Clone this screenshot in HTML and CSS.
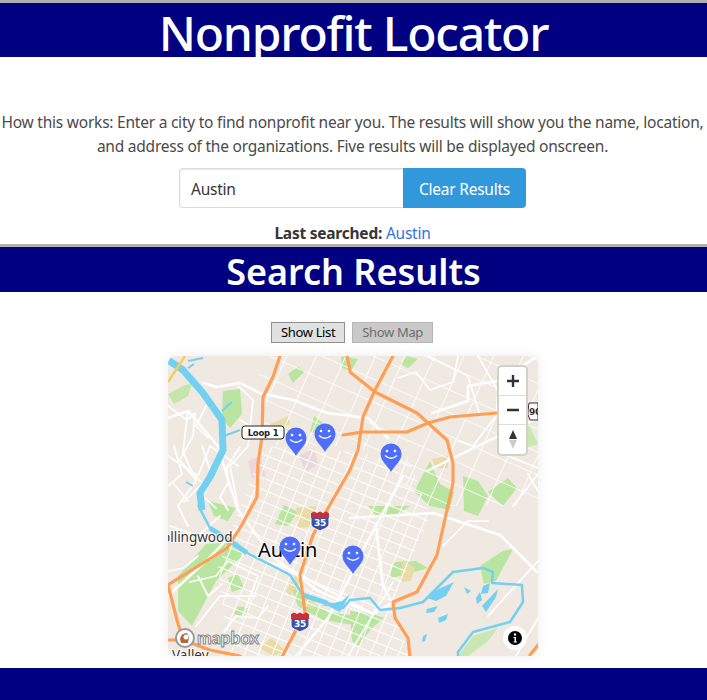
FILE: index.html
```html
<!DOCTYPE html>
<html lang="en">

<head>
    <meta charset="UTF-8">
    <meta name="viewport" content="width=device-width, initial-scale=1.0">
    <title>Nonprofit Locator</title>

    <link rel="stylesheet" href="styles.css">
</head>

<body>
    <header class="banner">
        <h1>Nonprofit Locator</h1>
    </header>

    <section class="search">
        <p class="intro">How this works: Enter a city to find nonprofit near you. The results will show you the name, location, and address of the organizations. Five results will be displayed onscreen.</p>
        <form class="search-form">
            <input class="search-input" type="text" value="Austin">
            <button class="clear-btn" type="button">Clear Results</button>
        </form>
        <p class="last-searched"><strong>Last searched:</strong> <a href="#">Austin</a></p>
    </section>

    <section class="results">
        <h2 class="results-title">Search Results</h2>
        <div class="toggle">
            <button class="toggle-btn" type="button">Show List</button>
            <button class="toggle-btn" type="button" disabled>Show Map</button>
        </div>

        <div class="map">
            <svg class="map-canvas" viewBox="0 0 370 300" width="370" height="300">
                <defs>
                    <pattern id="grid-dense" width="13" height="11" patternUnits="userSpaceOnUse" patternTransform="rotate(22)">
                        <path d="M0 0H13M0 0V11" stroke="#fff" stroke-width="1.900" fill="none" />
                    </pattern>
                    <pattern id="grid-wide" width="27" height="21" patternUnits="userSpaceOnUse" patternTransform="rotate(24)">
                        <path d="M0 0H27M0 0V21" stroke="#fff" stroke-width="1.700" fill="none" />
                    </pattern>
                    <g id="pin">
                        <path d="M0 18C-3 12-10.500 7-10.500 0A10.500 10.500 0 0 1 10.500 0C10.500 7 3 12 0 18Z" fill="#4f6ef7" />
                        <circle cx="-4" cy="-3" r="1.300" fill="#fff" />
                        <circle cx="4" cy="-3" r="1.300" fill="#fff" />
                        <path d="M-6 1.500Q0 7 6 1.500" fill="none" stroke="#fff" stroke-width="1.300" />
                    </g>
                    <g id="shield">
                        <path d="M-9-8H9V3C9 7 3 8 0 10C-3 8-9 7-9 3Z" fill="#3f51a5" stroke="#fff" stroke-width="1" />
                        <path d="M-9-3V-8L-6-9.500-3-8 0-9.500 3-8 6-9.500 9-8V-3Z" fill="#c8303a" />
                        <text class="shield-text" y="4.500" text-anchor="middle">35</text>
                    </g>
                </defs>

                <rect width="370" height="300" fill="#efe9e1" />

                <!-- parks -->
                <g fill="#b9e5a0">
                    <path d="M55 35L72 33 74 58 62 72 54 62Z" />
                    <path d="M0 38L15 30 24 27 20 40 6 48Z" opacity=".8" />
                    <path d="M120 18L130 11 137 15 125 27Z" />
                    <path d="M146 60L156 68 155 78 142 76Z" />
                    <path d="M173 0L190 3 183 15 174 12Z" />
                    <path d="M239 0L250 3 240 12 232 8Z" />
                    <path d="M262 105L272 128 286 136 282 154 262 150 246 136Z" />
                    <path d="M295 120L310 125 320 140 310 160 296 155Z" />
                    <path d="M342 60L358 62 370 88 358 92Z" opacity=".7" />
                    <path d="M320 136L340 122 349 132 335 150Z" />
                    <path d="M116 149L130 156 120 170 107 168Z" />
                    <path d="M40 145L68 152 60 165 46 160Z" />
                    <path d="M10 220L38 188 70 186 74 200 48 225 24 270 10 255Z" />
                    <path d="M60 222L70 218 76 232 64 236Z" />
                    <path d="M120 225L135 240 160 256 188 260 210 262 206 270 180 268 155 264 130 250Z" />
                    <path d="M182 255L204 258 216 262 204 272 190 290 184 285Z" />
                    <path d="M200 150L242 150 228 160 210 162Z" />
                    <path d="M225 206L248 205 260 212 232 220 222 222Z" />
                    <path d="M312 210L335 195 345 193 328 225 316 228Z" />
                    <path d="M290 300L305 280 330 272 320 285 300 300Z" opacity=".7" />
                    <path d="M70 250L80 252 76 262 66 258Z" />
                </g>
                <g fill="#e8dda8">
                    <path d="M128 152L148 150 150 170 130 172Z" />
                    <path d="M98 70L120 60 122 68 106 76Z" />
                    <path d="M103 282L118 295 105 300 92 292Z" />
                    <path d="M264 103L280 100 280 112 268 112Z" />
                    <path d="M235 204L247 212 243 225 232 226Z" />
                    <path d="M140 240L148 240 146 252 136 250Z" />
                    <path d="M118 235L128 218 134 222 122 240Z" />
                </g>
                <path d="M80 105L92 100 98 120 84 122Z M131 100L146 92 150 108 138 116Z" fill="#ead7dc" />

                <!-- roads -->
                <path d="M95 90L240 100 262 160 225 246 240 300 60 300 50 210Z" fill="url(#grid-dense)" />
                <path d="M90 0H370V150L260 150 190 90 95 90Z" fill="url(#grid-wide)" />
                <g fill="none" stroke="#fff" stroke-linecap="round" stroke-linejoin="round">
                    <g stroke-width="2.500">
                        <path d="M35 27L49 31 72 27 92 37 125 44 159 57 200 62 220 82" />
                        <path d="M0 62L20 55 50 90 62 130 70 154 104 200 150 235 205 258 225 246" />
                        <path d="M0 240L38 205 70 172" />
                        <path d="M95 205L120 212 145 226 205 258" />
                        <path d="M182 162L265 157 332 179 352 199 369 216" />
                        <path d="M208 170L215 230 225 248" />
                        <path d="M128 300L160 262 180 225 197 190 235 120" />
                        <path d="M264 57L300 45 300 30 330 25 370 0" />
                        <path d="M259 115L320 85 370 62" />
                    </g>
                    <g stroke-width="1.700">
                        <path d="M0 50L19 64 27 57 25 80 12 104 22 117 35 127 16 146" />
                        <path d="M72 91L59 111 60 127 52 141 60 154" />
                        <path d="M20 55L15 96 28 125 10 150 20 170" />
                        <path d="M34 90L44 120 35 140 48 152" />
                        <path d="M70 30L85 44 80 90 62 110 70 150" />
                        <path d="M0 100L30 120 42 90 70 110" />
                        <path d="M2 170L30 180 52 160" />
                        <path d="M0 130L14 118 6 90M38 50L28 70 40 82M72 64L86 72 76 84" />
                        <path d="M22 226L48 220 60 205 90 220 74 262" />
                        <path d="M28 270L52 240 88 240" />
                        <path d="M30 220L40 240 54 228" />
                        <path d="M0 215L16 212 30 200" />
                        <path d="M56 276L68 260 90 262 100 250" />
                        <path d="M290 0L285 26 262 34 248 16 230 22" />
                        <path d="M310 0L330 35 328 60 305 90 290 85" />
                        <path d="M260 0L300 20 312 60" />
                        <path d="M360 118L370 135M340 100L370 112M345 150L370 118" />
                        <path d="M320 260L370 205" />
                        <path d="M348 300L370 262" />
                        <path d="M275 190L300 165 320 165" />
                        <path d="M180 300L225 226" />
                        <path d="M6 128L20 145" />
                    </g>
                </g>
                <path d="M0 4L15 14 35 37 54 64 55 94 42 121 32 137 34 154" fill="none" stroke="#74d0f1" stroke-width="7" stroke-linejoin="round" />
                <path d="M20 5L35 2M20 12L26 8M54 55L64 46M56 80L72 74M25 130L18 126" fill="none" stroke="#74d0f1" stroke-width="2" />
                <path d="M30 149L42 172 65 187 79 197 109 212 122 219 135 239 159 247 175 252 182 244 202 242 212 254 232 252 255 246 285 216 315 212 325 216 324 227 354 229 355 246 342 266 305 276 290 296 290 301" fill="none" stroke="#74d0f1" stroke-width="2.500" stroke-linejoin="round" />
                <path d="M42 172L65 187 79 197M135 239L159 247" fill="none" stroke="#74d0f1" stroke-width="5" />
                <path d="M153 250L174 245 182 238 172 256 160 250Z" fill="#74d0f1" />
                <g fill="#74d0f1">
                    <path d="M264 236L286 226 278 240 268 245 259 242Z" />
                    <path d="M259 253L270 250 266 256 258 257Z" />
                    <path d="M270 262L280 258 278 264 271 267Z" />
                    <path d="M296 231L303 235 299 238Z" />
                    <path d="M308 242L312 236 314 244 309 248Z" />
                    <path d="M315 230L322 227 320 237 313 238Z" />
                    <path d="M314 250L330 233 328 241 318 256Z" />
                    <path d="M255 280L259 278 257 285 254 286Z" />
                </g>
                <g fill="none" stroke="#ff9e55" stroke-linecap="round" stroke-linejoin="round" stroke-width="3.200">
                    <path d="M112 0L105 21 95 41 94 81 90 107 89 141 82 154 72 172 59 192 35 207 0 229 9 264 15 284 42 294 72 300" />
                    <path d="M0 284H15" />
                    <path d="M225 0L207 34 195 61 190 94 182 114 159 154 145 179 132 219 137 256 127 276 114 301" />
                    <path d="M182 16L207 36 249 57 260 67 279 84 285 107 285 127 279 154 269 199 249 236 225 246 227 262 240 282 242 301" />
                    <path d="M175 79L194 76 239 76 260 67 282 61 329 57" />
                    <path d="M179 0L182 14" />
                    <path d="M362 299L370 289" />
                </g>
                <path d="M0 26L17 0" stroke="#f6ce5d" stroke-width="2.500" />

                <!-- labels -->
                <rect x="74" y="70" width="42" height="13" rx="3" fill="#fff" stroke="#222" />
                <text class="loop-text" x="95" y="80" text-anchor="middle">Loop 1</text>
                <text class="place-sm" x="-6" y="186">ollingwood</text>
                <text class="place-sm" x="4" y="304">Valley</text>
                <text class="place-lg" x="90" y="201">Austin</text>
                <use href="#shield" x="152" y="165" />
                <use href="#shield" x="132" y="266" />
                <path d="M361 47H370V64H362Q359 58 360 55Z" fill="#fff" stroke="#333" />
                <text class="shield-90" x="361" y="59">90</text>

                <!-- markers -->
                <use href="#pin" x="128" y="82" />
                <use href="#pin" x="157" y="78" />
                <use href="#pin" x="223" y="98" />
                <use href="#pin" x="122" y="191" />
                <use href="#pin" x="185" y="200" />

                <!-- logo and attribution -->
                <circle cx="17" cy="282" r="9" fill="#fff" stroke="#999" stroke-width="2" />
                <path d="M12 283Q13 277 19 277L21 281 20 287 13 287Z" fill="#b5673c" />
                <circle cx="18" cy="281" r="2.500" fill="#fff" />
                <text class="logo-text" x="29" y="288">mapbox</text>
                <circle cx="347" cy="282" r="12" fill="#fff" />
                <circle cx="347" cy="282" r="7" fill="#000" />
                <circle cx="347" cy="278.500" r="1.200" fill="#fff" />
                <path d="M345.500 281H348V285.500H349V286.500H345.500V285.500H346.500V282H345.500Z" fill="#fff" />
            </svg>

            <div class="map-controls">
                <button class="ctrl" type="button" aria-label="Zoom in">
                    <svg width="14" height="14" viewBox="0 0 14 14"><path d="M7 1V13M1 7H13" stroke="#333" stroke-width="2.400" /></svg>
                </button>
                <button class="ctrl" type="button" aria-label="Zoom out">
                    <svg width="14" height="14" viewBox="0 0 14 14"><path d="M1 7H13" stroke="#333" stroke-width="2.400" /></svg>
                </button>
                <button class="ctrl" type="button" aria-label="Reset bearing">
                    <svg width="10" height="20" viewBox="0 0 10 20"><path d="M5 0L9 9H1Z" fill="#333" /><path d="M5 19L9 10H1Z" fill="#ccc" /></svg>
                </button>
            </div>
        </div>
    </section>

    <footer class="footer"></footer>
</body>

</html>
```

FILE: styles.css
```css
* {
    box-sizing: border-box;
}

body {
    margin: 0;
    height: 700px;
    overflow: hidden;
    font-family: "Noto Sans", sans-serif;
    font-size: 15.500px;
    letter-spacing: -0.23px;
    line-height: 24px;
    color: #4a4a4a;
    background: #fff;
}

.banner {
    border-top: 3px solid #b0b0b0;
    background: #000080;
    height: 57px;
    text-align: center;
}

h1 {
    margin: 0;
    font-size: 48px;
    letter-spacing: -1.2px;
    line-height: 60px;
    height: 54px;
    font-weight: 500;
    color: #fff;
}

.search {
    height: 187px;
    padding: 53px 2px 0 0;
    text-align: center;
}

.intro {
    margin: 0;
}

.search-form {
    display: flex;
    width: 347px;
    height: 40px;
    margin: 10px auto 13px;
}

.search-input {
    flex: 1;
    min-width: 0;
    padding: 2px 11px 0;
    border: 1px solid #dbdbdb;
    border-right: 0;
    border-radius: 4px 0 0 4px;
    font: inherit;
    letter-spacing: inherit;
    color: #363636;
    box-shadow: inset 0 1px 2px rgba(10, 10, 10, .1);
}

.clear-btn {
    width: 123px;
    padding-top: 2px;
    border: 0;
    border-radius: 0 4px 4px 0;
    background: #3298dc;
    color: #fff;
    font: inherit;
    letter-spacing: inherit;
}

.last-searched {
    margin: 0;
}

.last-searched strong {
    color: #363636;
}

.last-searched a {
    color: #3273dc;
    text-decoration: none;
}

.results {
    height: 424px;
    border-top: 3px solid #b0b0b0;
}

.results-title {
    margin: 0;
    height: 45px;
    background: #000080;
    color: #fff;
    font-size: 36px;
    letter-spacing: 0;
    line-height: 50px;
    font-weight: 600;
    text-align: center;
}

.toggle {
    display: flex;
    justify-content: center;
    gap: 7px;
    margin-top: 30px;
    padding-right: 3px;
}

.toggle-btn {
    height: 21px;
    padding: 0 9px;
    border: 1px solid #8f8f8f;
    border-radius: 0;
    background: #e1e1e1;
    color: #000;
    font-family: inherit;
    font-size: 13px;
    letter-spacing: -0.35px;
    line-height: 17px;
}

.toggle-btn:disabled {
    border-color: #b5b5b5;
    background: #c9c9c9;
    color: #6d6d6d;
}

.map {
    position: relative;
    width: 370px;
    height: 300px;
    margin: 13px 0 0 168px;
    border-radius: 8px;
    box-shadow: 0 0 12px rgba(0, 0, 0, .08);
    overflow: hidden;
}

.map-canvas {
    display: block;
}

.map-controls {
    position: absolute;
    top: 9px;
    right: 10px;
    display: flex;
    flex-direction: column;
    width: 31px;
    border: 2px solid #d5cfc8;
    border-radius: 5px;
    background: #fff;
}

.ctrl {
    display: flex;
    align-items: center;
    justify-content: center;
    height: 29px;
    padding: 0;
    border: 0;
    border-bottom: 1px solid #ddd;
    background: none;
}

.ctrl:last-child {
    border-bottom: 0;
}

.shield-text {
    font: bold 9px "DejaVu Sans", sans-serif;
    fill: #fff;
}

.shield-90 {
    font: bold 9px "DejaVu Sans", sans-serif;
    fill: #333;
}

.loop-text {
    font: bold 8.500px "DejaVu Sans", sans-serif;
    fill: #222;
}

.place-sm {
    font: 13.500px "Noto Sans", sans-serif;
    letter-spacing: 0;
    fill: #333;
    stroke: #fff;
    stroke-width: 2px;
    paint-order: stroke;
}

.place-lg {
    font: 20px "Noto Sans", sans-serif;
    letter-spacing: 0;
    fill: #000;
    stroke: #fff;
    stroke-width: 2px;
    paint-order: stroke;
}

.logo-text {
    font: bold 17.500px "Lato", sans-serif;
    letter-spacing: 0;
    fill: #fff;
    stroke: #888;
    stroke-width: 1px;
}

.footer {
    height: 32px;
    background: #000080;
}
```
